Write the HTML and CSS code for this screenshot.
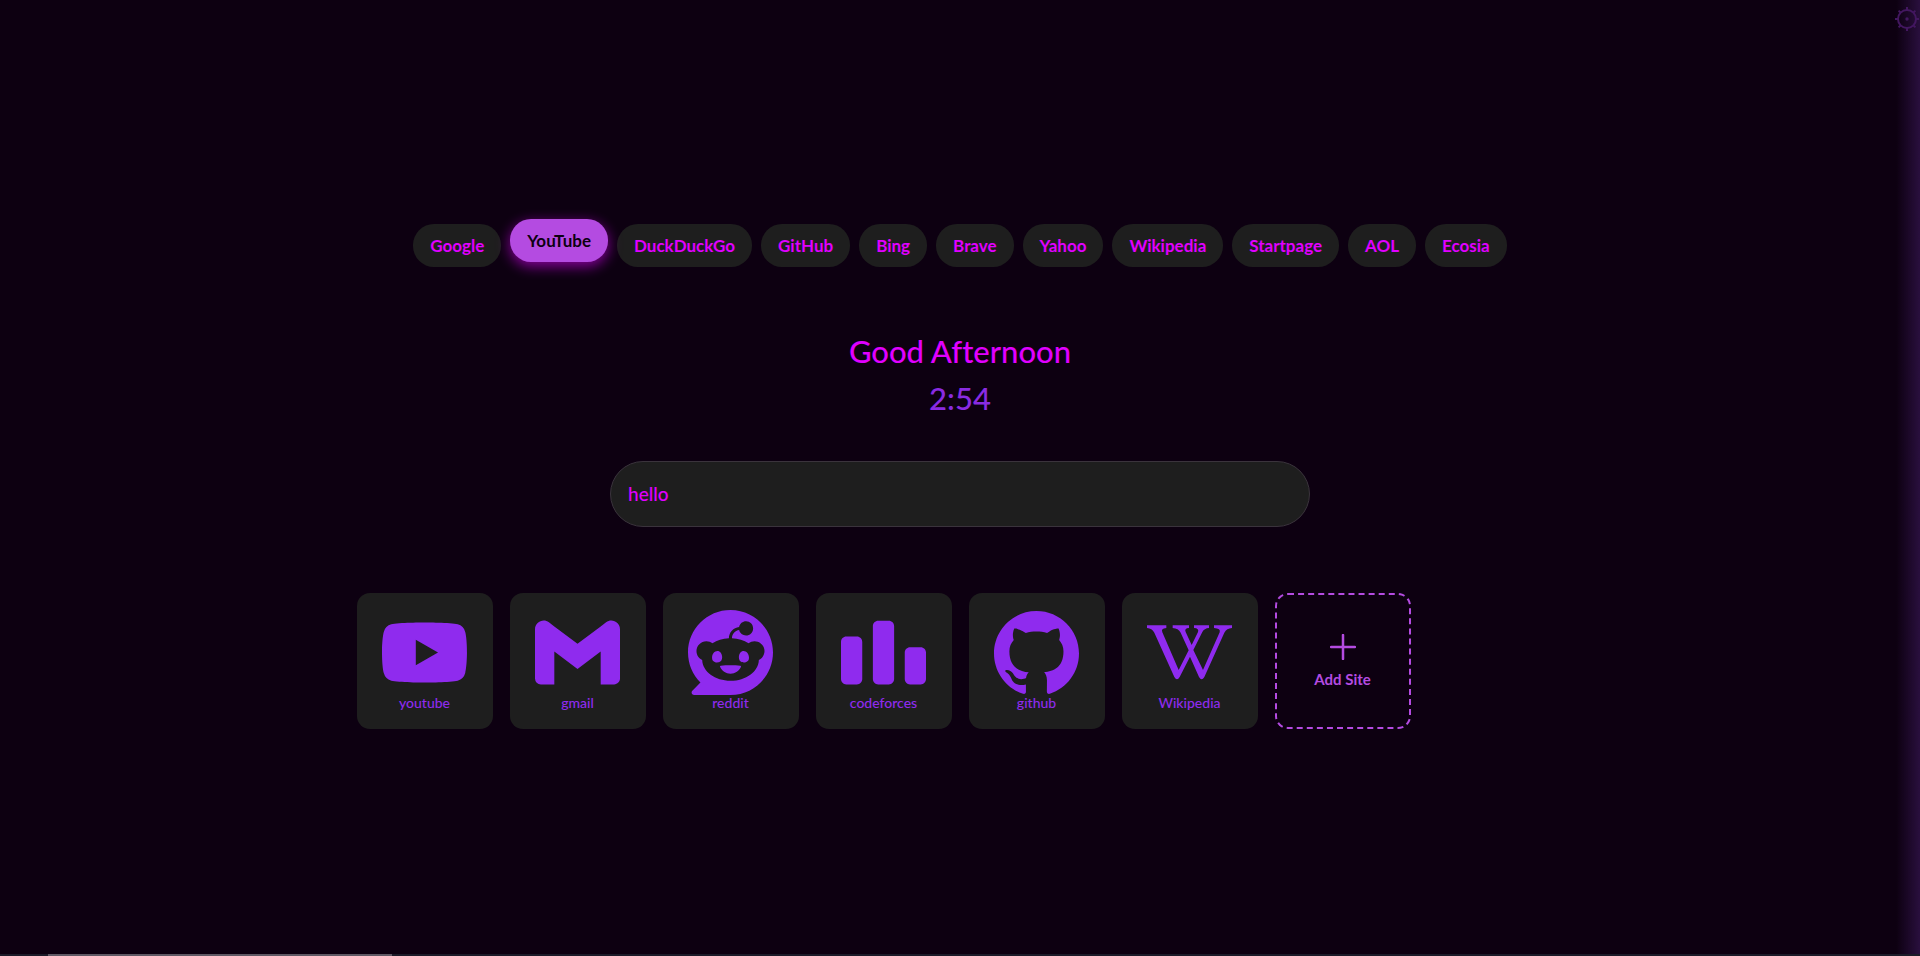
FILE: index.html
```html
<!DOCTYPE html>
<html lang="en">
<head>
<meta charset="utf-8">
<title>New Tab</title>
<link rel="stylesheet" href="styles.css">
</head>
<body>
<main class="page">
  <nav class="engines" aria-label="Search engines">
    <button class="engine">Google</button>
    <button class="engine engine-active" aria-pressed="true">YouTube</button>
    <button class="engine">DuckDuckGo</button>
    <button class="engine">GitHub</button>
    <button class="engine">Bing</button>
    <button class="engine">Brave</button>
    <button class="engine">Yahoo</button>
    <button class="engine">Wikipedia</button>
    <button class="engine">Startpage</button>
    <button class="engine">AOL</button>
    <button class="engine">Ecosia</button>
  </nav>

  <header class="greeting">
    <h1 class="greeting-text">Good Afternoon</h1>
    <time class="clock">2:54</time>
  </header>

  <input class="search" type="text" value="hello" aria-label="Search">

  <section class="sites" aria-label="Sites">
    <a class="site" href="#">
      <svg class="site-icon" viewBox="0 0 24 24" aria-hidden="true"><path d="M23.498 6.186a3.016 3.016 0 0 0-2.122-2.136C19.505 3.545 12 3.545 12 3.545s-7.505 0-9.377.505A3.017 3.017 0 0 0 .502 6.186C0 8.07 0 12 0 12s0 3.93.502 5.814a3.016 3.016 0 0 0 2.122 2.136c1.871.505 9.376.505 9.376.505s7.505 0 9.377-.505a3.015 3.015 0 0 0 2.122-2.136C24 15.93 24 12 24 12s0-3.93-.502-5.814zM9.545 15.568V8.432L15.818 12l-6.273 3.568z"/></svg>
      <span class="site-name">youtube</span>
    </a>
    <a class="site" href="#">
      <svg class="site-icon" viewBox="0 0 24 24" aria-hidden="true"><path d="M24 5.457v13.909c0 .904-.732 1.636-1.636 1.636h-3.819V11.73L12 16.64l-6.545-4.91v9.273H1.636A1.636 1.636 0 0 1 0 19.366V5.457c0-2.023 2.309-3.178 3.927-1.964L5.455 4.64 12 9.548l6.545-4.91 1.528-1.145C21.69 2.28 24 3.434 24 5.457z"/></svg>
      <span class="site-name">gmail</span>
    </a>
    <a class="site" href="#">
      <svg class="site-icon" viewBox="0 0 24 24" aria-hidden="true"><path d="M12 0C5.373 0 0 5.373 0 12c0 3.314 1.343 6.314 3.515 8.485l-2.286 2.286C.775 23.225 1.097 24 1.738 24H12c6.627 0 12-5.373 12-12S18.627 0 12 0Zm4.388 3.199c1.104 0 1.999.895 1.999 1.999 0 1.105-.895 2-1.999 2-.946 0-1.739-.657-1.947-1.539v.002c-1.147.162-2.032 1.15-2.032 2.341v.007c1.776.067 3.4.567 4.686 1.363.473-.363 1.064-.58 1.707-.58 1.547 0 2.802 1.254 2.802 2.802 0 1.117-.655 2.081-1.601 2.531-.088 3.256-3.637 5.876-7.997 5.876-4.361 0-7.905-2.617-7.998-5.87-.954-.447-1.614-1.415-1.614-2.538 0-1.548 1.255-2.802 2.803-2.802.645 0 1.239.218 1.712.585 1.275-.79 2.881-1.291 4.64-1.365v-.01c0-1.663 1.263-3.034 2.88-3.207.188-.911.993-1.595 1.959-1.595Zm-8.085 8.376c-.784 0-1.459.78-1.506 1.797-.047 1.016.64 1.429 1.426 1.429.786 0 1.371-.369 1.418-1.385.047-1.017-.553-1.841-1.338-1.841Zm7.406 0c-.786 0-1.385.824-1.338 1.841.047 1.017.634 1.385 1.418 1.385.785 0 1.473-.413 1.426-1.429-.046-1.017-.721-1.797-1.506-1.797Zm-3.703 4.013c-.974 0-1.907.048-2.77.135-.147.015-.241.168-.183.305.483 1.154 1.622 1.964 2.953 1.964 1.33 0 2.47-.81 2.953-1.964.057-.137-.037-.29-.184-.305-.863-.087-1.795-.135-2.769-.135Z"/></svg>
      <span class="site-name">reddit</span>
    </a>
    <a class="site" href="#">
      <svg class="site-icon" viewBox="0 0 24 24" aria-hidden="true"><path d="M4.5 7.5C5.328 7.5 6 8.172 6 9v10.5c0 .828-.672 1.5-1.5 1.5h-3C.673 21 0 20.328 0 19.5V9c0-.828.673-1.5 1.5-1.5h3zm9-4.5c.828 0 1.5.672 1.5 1.5v15c0 .828-.672 1.5-1.5 1.5h-3c-.827 0-1.5-.672-1.5-1.5v-15c0-.828.673-1.5 1.5-1.5h3zm9 7.5c.828 0 1.5.672 1.5 1.5v7.5c0 .828-.672 1.5-1.5 1.5h-3c-.828 0-1.5-.672-1.5-1.5V12c0-.828.672-1.5 1.5-1.5h3z"/></svg>
      <span class="site-name">codeforces</span>
    </a>
    <a class="site" href="#">
      <svg class="site-icon" viewBox="0 0 24 24" aria-hidden="true"><path d="M12 .297c-6.63 0-12 5.373-12 12 0 5.303 3.438 9.8 8.205 11.385.6.113.82-.258.82-.577 0-.285-.01-1.04-.015-2.04-3.338.724-4.042-1.61-4.042-1.61C4.422 18.07 3.633 17.7 3.633 17.7c-1.087-.744.084-.729.084-.729 1.205.084 1.838 1.236 1.838 1.236 1.07 1.835 2.809 1.305 3.495.998.108-.776.417-1.305.76-1.605-2.665-.3-5.466-1.332-5.466-5.93 0-1.31.465-2.38 1.235-3.22-.135-.303-.54-1.523.105-3.176 0 0 1.005-.322 3.3 1.23.96-.267 1.98-.399 3-.405 1.02.006 2.04.138 3 .405 2.28-1.552 3.285-1.23 3.285-1.23.645 1.653.24 2.873.12 3.176.765.84 1.23 1.91 1.23 3.22 0 4.61-2.805 5.625-5.475 5.92.42.36.81 1.096.81 2.22 0 1.606-.015 2.896-.015 3.286 0 .315.21.69.825.57C20.565 22.092 24 17.592 24 12.297c0-6.627-5.373-12-12-12"/></svg>
      <span class="site-name">github</span>
    </a>
    <a class="site" href="#">
      <svg class="site-icon" viewBox="0 -2 255 255" aria-hidden="true"><path d="M0 44H58V52Q41 53 46 65L95 178L125 119L101 66Q94 53 77 52V44H126V52Q111 53 116 64L134 103L153 64Q157 53 141 52V44H186V52Q172 53 166 64L139 118L168 178L218 65Q222 53 201 52V44H255V52Q239 53 232 66L172 199Q164 213 156 199L129 138L98 199Q90 213 82 199L22 66Q15 53 0 52Z"/></svg>
      <span class="site-name">Wikipedia</span>
    </a>
    <button class="add-site">
      <svg class="add-icon" viewBox="0 0 26 26" aria-hidden="true"><path d="M13 1V25M1 13H25"/></svg>
      <span>Add Site</span>
    </button>
  </section>
</main>

<aside class="side-glow"></aside>
<button class="settings" aria-label="Settings">
  <svg class="gear" viewBox="0 0 24 24" aria-hidden="true"><circle cx="12" cy="12" r="9"/><path d="M12 3V0M12 21V24M3 12H0M21 12H24M5.600 5.600L3.600 3.600M18.400 5.600L20.400 3.600M5.600 18.400L3.600 20.400M18.400 18.400L20.400 20.400"/><circle class="gear-dot" cx="12" cy="12" r="1.700"/></svg>
</button>
<div class="scrollbar"><div class="scroll-thumb"></div></div>
</body>
</html>
```
FILE: styles.css
```css
* {
  box-sizing: border-box;
}

body {
  margin: 0;
  background: #0d0011;
  font-family: Lato, "Open Sans", sans-serif;
  font-variant-ligatures: none;
}

button,
input {
  font-family: inherit;
}

button {
  cursor: pointer;
}

.page {
  display: flex;
  flex-direction: column;
  align-items: center;
  justify-content: center;
  min-height: 100vh;
  padding: 0 24px 4px;
}

.engines {
  display: flex;
  flex-wrap: wrap;
  justify-content: center;
  gap: 9px;
}

.engine {
  padding: 10px 17px;
  border: 0;
  border-radius: 21px;
  background: #1e1e1e;
  color: #e000ff;
  font-size: 17px;
  font-weight: 700;
  line-height: 23px;
}

.engine-active {
  background: #b44be1;
  color: #0d0011;
  box-shadow: 0 4px 14px rgba(223, 0, 255, 0.6);
  transform: translateY(-5px);
}

.greeting {
  display: flex;
  flex-direction: column;
  align-items: center;
  margin-top: 61px;
  font-size: 31px;
  font-weight: 500;
  line-height: 47px;
}

.greeting-text {
  margin: 0;
  color: #e000ff;
  font-size: inherit;
  font-weight: inherit;
}

.clock {
  color: #8a2be2;
}

.search {
  width: 700px;
  max-width: 100%;
  height: 66px;
  margin-top: 39px;
  padding: 0 17px;
  border: 1px solid #3a333c;
  border-radius: 33px;
  outline: 0;
  background: #1e1e1e;
  color: #e000ff;
  font-size: 19px;
  font-weight: 500;
}

.sites {
  display: grid;
  grid-template-columns: repeat(auto-fill, 136px);
  gap: 17px;
  width: 100%;
  max-width: 1207px;
  margin-top: 66px;
}

.site,
.add-site {
  display: flex;
  flex-direction: column;
  align-items: center;
  aspect-ratio: 1;
  border-radius: 13px;
}

.site {
  padding-top: 17px;
  background: #1e1e1e;
  color: #8f2bee;
  text-decoration: none;
}

.site-icon {
  width: 85px;
  height: 85px;
  fill: currentColor;
}

.site-name {
  font-size: 14px;
  font-weight: 500;
  line-height: 16px;
}

.add-site {
  justify-content: center;
  gap: 9px;
  padding: 2px 0 0;
  border: 2px dashed #b44be1;
  background: transparent;
  color: #b44be1;
  font-size: 15px;
  font-weight: 700;
  line-height: 20px;
}

.add-icon {
  width: 26px;
  height: 26px;
  fill: none;
  stroke: currentColor;
  stroke-width: 2.5;
  stroke-linecap: round;
}

.side-glow {
  position: fixed;
  top: 0;
  right: 0;
  bottom: 0;
  width: 24px;
  background: linear-gradient(to right, rgba(42, 15, 62, 0), #2a0f3e);
}

.settings {
  position: fixed;
  top: 7px;
  right: 1px;
  padding: 0;
  border: 0;
  background: transparent;
  color: #431760;
}

.gear {
  display: block;
  width: 24px;
  height: 24px;
  fill: none;
  stroke: currentColor;
  stroke-width: 2;
}

.gear-dot {
  fill: currentColor;
  stroke: none;
}

.scrollbar {
  position: fixed;
  right: 0;
  bottom: 0;
  left: 0;
  height: 2px;
  padding: 0 2.5%;
  background: #1b1b29;
}

.scroll-thumb {
  width: 344px;
  height: 2px;
  background: #5f5965;
}
```
